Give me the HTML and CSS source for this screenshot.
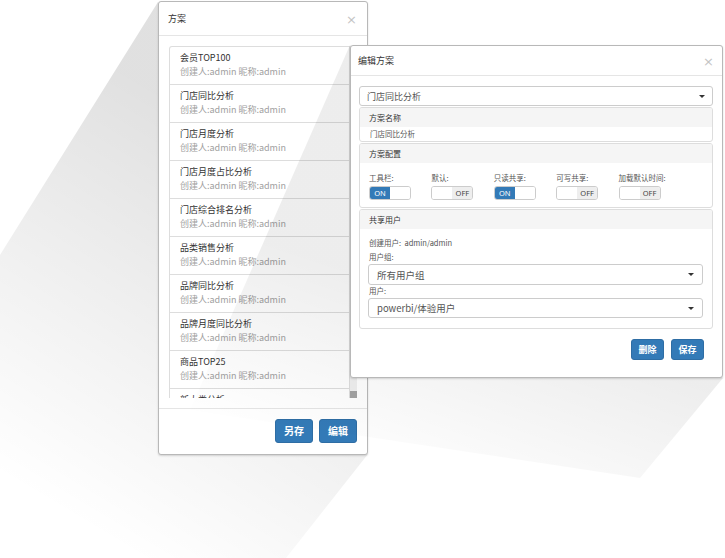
FILE: index.html
```html
<!DOCTYPE html>
<html lang="zh-CN">
<head>
<meta charset="utf-8">
<title>方案</title>
<link rel="stylesheet" href="styles.css">
</head>
<body>
<div class="stage">
  <svg class="shade shade-back" width="725" height="558" viewBox="0 0 725 558" aria-hidden="true">
    <defs>
      <linearGradient id="gL" gradientUnits="userSpaceOnUse" x1="250" y1="150" x2="40" y2="500">
        <stop offset="0" stop-color="#000" stop-opacity="0.12"/>
        <stop offset="1" stop-color="#000" stop-opacity="0"/>
      </linearGradient>
    </defs>
    <polygon points="158,2 0,255 0,558 286,558 368,454 158,454" fill="url(#gL)"/>
  </svg>

  <section class="dlg dlg-list">
    <header class="dlg-head">
      <span class="dlg-title">方案</span>
      <span class="close">×</span>
    </header>
    <div class="dlg-body">
      <div class="list-wrap">
        <ul class="list">
          <li class="item"><div class="item-name">会员TOP100</div><div class="item-meta">创建人:admin 昵称:admin</div></li>
          <li class="item"><div class="item-name">门店同比分析</div><div class="item-meta">创建人:admin 昵称:admin</div></li>
          <li class="item"><div class="item-name">门店月度分析</div><div class="item-meta">创建人:admin 昵称:admin</div></li>
          <li class="item"><div class="item-name">门店月度占比分析</div><div class="item-meta">创建人:admin 昵称:admin</div></li>
          <li class="item"><div class="item-name">门店综合排名分析</div><div class="item-meta">创建人:admin 昵称:admin</div></li>
          <li class="item"><div class="item-name">品类销售分析</div><div class="item-meta">创建人:admin 昵称:admin</div></li>
          <li class="item"><div class="item-name">品牌同比分析</div><div class="item-meta">创建人:admin 昵称:admin</div></li>
          <li class="item"><div class="item-name">品牌月度同比分析</div><div class="item-meta">创建人:admin 昵称:admin</div></li>
          <li class="item"><div class="item-name">商品TOP25</div><div class="item-meta">创建人:admin 昵称:admin</div></li>
          <li class="item"><div class="item-name">新大类分析</div><div class="item-meta">创建人:admin 昵称:admin</div></li>
        </ul>
        <div class="scroll"><div class="thumb"></div></div>
      </div>
    </div>
    <footer class="dlg-foot">
      <button class="btn">另存</button>
      <button class="btn">编辑</button>
    </footer>
  </section>

  <svg class="shade shade-front" width="725" height="558" viewBox="0 0 725 558" aria-hidden="true">
    <defs>
      <linearGradient id="gR" gradientUnits="userSpaceOnUse" x1="440" y1="300" x2="380" y2="480">
        <stop offset="0" stop-color="#000" stop-opacity="0.07"/>
        <stop offset="1" stop-color="#000" stop-opacity="0"/>
      </linearGradient>
    </defs>
    <polygon points="350,45 190,410 640,478 723,378" fill="url(#gR)"/>
  </svg>

  <section class="dlg dlg-edit">
    <header class="dlg-head edit-head">
      <span class="dlg-title">编辑方案</span>
      <span class="close">×</span>
    </header>
    <div class="edit-body">
      <div class="select select-top"><span>门店同比分析</span><i class="caret"></i></div>

      <div class="panel">
        <div class="panel-head">方案名称</div>
        <div class="panel-body name-body">门店同比分析</div>
      </div>

      <div class="panel">
        <div class="panel-head">方案配置</div>
        <div class="panel-body cfg-body">
          <div class="cfg">
            <div class="cfg-label">工具栏:</div>
            <div class="toggle"><span class="t-on">ON</span><span class="t-blank"></span></div>
          </div>
          <div class="cfg">
            <div class="cfg-label">默认:</div>
            <div class="toggle"><span class="t-blank"></span><span class="t-off">OFF</span></div>
          </div>
          <div class="cfg">
            <div class="cfg-label">只读共享:</div>
            <div class="toggle"><span class="t-on">ON</span><span class="t-blank"></span></div>
          </div>
          <div class="cfg">
            <div class="cfg-label">可写共享:</div>
            <div class="toggle"><span class="t-blank"></span><span class="t-off">OFF</span></div>
          </div>
          <div class="cfg">
            <div class="cfg-label">加载默认时间:</div>
            <div class="toggle"><span class="t-blank"></span><span class="t-off">OFF</span></div>
          </div>
        </div>
      </div>

      <div class="panel">
        <div class="panel-head">共享用户</div>
        <div class="panel-body share-body">
          <div class="line">创建用户:&nbsp;&nbsp;admin/admin</div>
          <div class="line">用户组:</div>
          <div class="select select-in"><span>所有用户组</span><i class="caret"></i></div>
          <div class="line line-sm">用户:</div>
          <div class="select select-in select-gap"><span>powerbi/体验用户</span><i class="caret"></i></div>
        </div>
      </div>
    </div>
    <footer class="edit-foot">
      <button class="btn btn-sm">删除</button>
      <button class="btn btn-sm">保存</button>
    </footer>
  </section>
</div>
</body>
</html>
```

FILE: styles.css
```css
* { box-sizing: border-box; }

html, body {
  margin: 0;
  padding: 0;
  background: #fff;
}

body {
  font-family: "Noto Sans CJK SC", "Noto Sans", sans-serif;
  color: #333;
}

.stage {
  position: relative;
  width: 725px;
  height: 558px;
  overflow: hidden;
  background: #fff;
}

.shade {
  position: absolute;
  left: 0;
  top: 0;
  pointer-events: none;
}
.shade-back { z-index: 0; }
.shade-front { z-index: 2; }

/* dialogs */
.dlg {
  position: absolute;
  background: #fff;
  border: 1px solid #b8b8b8;
  border-radius: 3px;
  box-shadow: 0 1px 2px rgba(0, 0, 0, 0.15);
  display: flex;
  flex-direction: column;
}

.dlg-list {
  left: 158px;
  top: 1px;
  width: 210px;
  height: 454px;
  z-index: 1;
}

.dlg-edit {
  left: 350px;
  top: 45px;
  width: 373px;
  height: 333px;
  z-index: 3;
}

.dlg-head {
  height: 34px;
  flex: none;
  border-bottom: 1px solid #e5e5e5;
  display: flex;
  align-items: center;
  justify-content: space-between;
  padding: 0 10px 0 9px;
}

.edit-head {
  height: 30px;
  padding: 0 8px 0 7px;
}

.dlg-title {
  font-size: 9px;
  line-height: 12px;
  color: #333;
}

.close {
  font-family: "DejaVu Sans", sans-serif;
  font-size: 13px;
  line-height: 12px;
  color: #c4c4c4;
  margin-top: 2px;
}

/* list dialog */
.dlg-body {
  flex: none;
  padding: 10px;
}

.list-wrap {
  display: flex;
  height: 352px;
}

.list {
  flex: 1;
  margin: 0;
  padding: 0;
  list-style: none;
  border: 1px solid #ddd;
  border-bottom: none;
  border-radius: 3px 0 0 0;
  overflow: hidden;
}

.item {
  padding: 4px 10px 5px;
  border-bottom: 1px solid #ddd;
  height: 38px;
}

.item-name {
  font-size: 9px;
  line-height: 14px;
  color: #333;
}

.item-meta {
  font-size: 9px;
  line-height: 14px;
  color: #a0a0a0;
}

.scroll {
  width: 7px;
  background: #efefef;
  display: flex;
  flex-direction: column;
  justify-content: flex-end;
}

.thumb {
  height: 7px;
  background: #a3a3a3;
}

.dlg-foot {
  flex: 1;
  border-top: 1px solid #e5e5e5;
  padding: 10px 10px 0 0;
  display: flex;
  justify-content: flex-end;
  align-items: flex-start;
  gap: 6px;
}

.btn {
  width: 38px;
  height: 24px;
  padding: 0;
  border: 1px solid #2e6da4;
  border-radius: 3px;
  background: #337ab7;
  color: #fff;
  font-family: "Noto Sans CJK SC", sans-serif;
  font-size: 10px;
  font-weight: 700;
  line-height: 20px;
}

.btn-sm {
  width: 33px;
  height: 21px;
  font-size: 9px;
  line-height: 18px;
}

/* edit dialog */
.edit-body {
  flex: none;
  padding: 10px 9px 0 8px;
}

.select {
  display: flex;
  align-items: center;
  justify-content: space-between;
  border: 1px solid #ccc;
  border-radius: 3px;
  background: #fff;
  color: #555;
}

.select-top {
  height: 20px;
  padding: 0 7px 0 7px;
  font-size: 9px;
}

.caret {
  width: 0;
  height: 0;
  border-left: 3px solid transparent;
  border-right: 3px solid transparent;
  border-top: 3px solid #333;
}

.panel {
  margin-top: 1px;
  border: 1px solid #ddd;
  border-radius: 3px;
  overflow: hidden;
}

.panel-head {
  height: 19px;
  background: #f5f5f5;
  font-size: 8px;
  line-height: 19px;
  padding-left: 9px;
  color: #333;
}

.name-body {
  height: 14px;
  font-size: 7.5px;
  line-height: 14px;
  padding-left: 10px;
  color: #555;
}

.cfg-body {
  height: 44px;
  padding: 9px 0 0 9px;
  display: flex;
}

.cfg {
  width: 62.4px;
}

.cfg-label {
  font-size: 7.5px;
  line-height: 12px;
  height: 14px;
  color: #555;
}

.toggle {
  width: 42px;
  height: 14px;
  border: 1px solid #ccc;
  border-radius: 3px;
  overflow: hidden;
  display: flex;
}

.toggle span {
  flex: 1;
  font-family: "Noto Sans", sans-serif;
  font-size: 7.5px;
  line-height: 12px;
  text-align: center;
}

.t-on {
  background: #337ab7;
  color: #fff;
}

.t-blank { background: #fff; }

.t-off {
  background: #eee;
  color: #444;
}

.share-body {
  height: 99px;
  padding: 7px 9px 0 8px;
}

.line {
  font-size: 7.5px;
  line-height: 14px;
  height: 14px;
  padding-left: 1px;
  color: #555;
}

.line-sm {
  line-height: 12px;
  height: 12px;
}

.select-in {
  height: 21px;
  padding: 0 8px 0 8px;
  font-size: 9.5px;
}

.select-gap {
  margin-top: 1px;
  height: 20px;
}

.edit-foot {
  flex: none;
  padding: 10px 18px 0 0;
  display: flex;
  justify-content: flex-end;
  gap: 7px;
}
```
